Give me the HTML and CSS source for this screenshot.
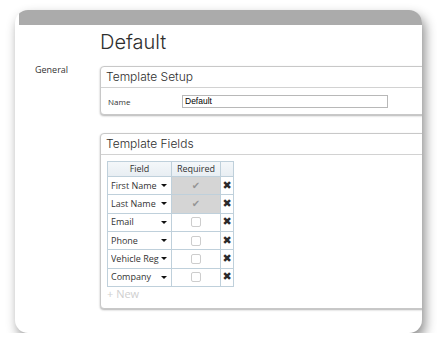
FILE: index.html
```html
<!DOCTYPE html>
<html>
<head>
<meta charset="utf-8">
<link rel="stylesheet" href="styles.css">
</head>
<body>
<div class="window">
  <div class="titlebar"></div>
  <div class="page">
    <h1 class="title">Default</h1>
    <div class="side-label">General</div>
    <div class="main">
      <section class="panel">
        <div class="panel-head">Template Setup</div>
        <div class="setup-body">
          <span class="name-label">Name</span>
          <input class="name-input" type="text" value="Default">
        </div>
      </section>
      <section class="panel">
        <div class="panel-head">Template Fields</div>
        <div class="fields-body">
          <div class="fgrid">
            <div class="cell hcell">Field</div>
            <div class="cell hcell">Required</div>
            <div class="cell hcell"></div>

            <div class="cell fcell"><span class="ftext">First Name</span><span class="caret"></span></div>
            <div class="cell rcell locked"><span class="check">✔</span></div>
            <div class="cell dcell">✖</div>

            <div class="cell fcell"><span class="ftext">Last Name</span><span class="caret"></span></div>
            <div class="cell rcell locked"><span class="check">✔</span></div>
            <div class="cell dcell">✖</div>

            <div class="cell fcell"><span class="ftext">Email</span><span class="caret"></span></div>
            <div class="cell rcell"><span class="box"></span></div>
            <div class="cell dcell">✖</div>

            <div class="cell fcell"><span class="ftext">Phone</span><span class="caret"></span></div>
            <div class="cell rcell"><span class="box"></span></div>
            <div class="cell dcell">✖</div>

            <div class="cell fcell"><span class="ftext">Vehicle Reg</span><span class="caret"></span></div>
            <div class="cell rcell"><span class="box"></span></div>
            <div class="cell dcell">✖</div>

            <div class="cell fcell"><span class="ftext">Company</span><span class="caret"></span></div>
            <div class="cell rcell"><span class="box"></span></div>
            <div class="cell dcell">✖</div>
          </div>
          <div class="new-link">+ New</div>
        </div>
      </section>
    </div>
  </div>
</div>
</body>
</html>
```
FILE: styles.css
```css
* { box-sizing: border-box; }
body {
  margin: 0;
  background: #fff;
  font-family: "Open Sans", sans-serif;
  color: #333;
}
.window {
  margin: 10px 0 0 15px;
  width: 407px;
  height: 323px;
  border-radius: 13px;
  background: #fff;
  overflow: hidden;
  box-shadow: 3px 6px 12px rgba(0,0,0,0.45);
  display: flex;
  flex-direction: column;
}
.titlebar {
  flex: none;
  height: 15px;
  margin-left: 4px;
  background: #ababab;
  border-top-left-radius: 3px;
}
.page {
  display: grid;
  grid-template-columns: 85px 1fr;
  row-gap: 12px;
  padding-top: 5px;
}
.title {
  grid-column: 2;
  margin: 0;
  font: 300 20px/24px Inter, sans-serif;
  color: #2e2e2e;
}
.side-label {
  padding-left: 20px;
  font-size: 9px;
  line-height: 10px;
  margin-top: -1px;
}
.main {
  display: flex;
  flex-direction: column;
  gap: 18px;
  margin-right: -20px;
}
.panel {
  border: 1px solid #c8c8c8;
  border-radius: 4px;
  background: #fff;
  box-shadow: 0 1px 2px rgba(0,0,0,0.3);
}
.panel-head {
  height: 21px;
  padding-left: 5px;
  font: 300 12px/20px Inter, sans-serif;
  color: #2e2e2e;
  border-bottom: 1px solid #d2d2d2;
}
.setup-body {
  height: 26px;
  display: flex;
  align-items: center;
  padding-left: 7px;
}
.name-label {
  width: 74px;
  font-size: 8px;
}
.name-input {
  width: 206px;
  height: 13px;
  margin: 0;
  padding: 0 2px;
  border: 1px solid #b8b8b8;
  border-radius: 0;
  font: 8.5px/11px "Liberation Sans", Arial, sans-serif;
  color: #000;
  background: #fff;
  outline: none;
}
.fields-body {
  padding: 6px 0 7px 6px;
}
.fgrid {
  display: grid;
  grid-template-columns: 64px 49px 13px;
  grid-template-rows: 15px repeat(6, 18.33px);
  width: max-content;
  border-left: 1px solid #bfd0db;
  border-top: 1px solid #bfd0db;
}
.cell {
  display: flex;
  align-items: center;
  border-right: 1px solid #bfd0db;
  border-bottom: 1px solid #bfd0db;
  font-size: 9px;
  line-height: 12px;
  color: #333;
  overflow: hidden;
}
.hcell {
  justify-content: center;
  background: linear-gradient(#f4f7fa, #e8eef3);
}
.fcell {
  padding: 0 4px 0 3px;
}
.ftext {
  flex: 1;
  overflow: hidden;
  white-space: nowrap;
}
.caret {
  flex: none;
  width: 0;
  height: 0;
  border-left: 3px solid transparent;
  border-right: 3px solid transparent;
  border-top: 3px solid #111;
  margin-left: 1px;
}
.rcell {
  justify-content: center;
}
.rcell.locked {
  background: #d5d5d5;
}
.check {
  font-family: "DejaVu Sans", sans-serif;
  font-size: 10px;
  color: #959595;
}
.box {
  width: 10px;
  height: 10px;
  border: 1px solid #cdcdcd;
  border-radius: 2px;
  background: #fff;
}
.dcell {
  justify-content: center;
  font-family: "DejaVu Sans", sans-serif;
  font-size: 11px;
  color: #2a2a2a;
}
.new-link {
  font-size: 11px;
  line-height: 14px;
  color: #cfcfcf;
}
```
